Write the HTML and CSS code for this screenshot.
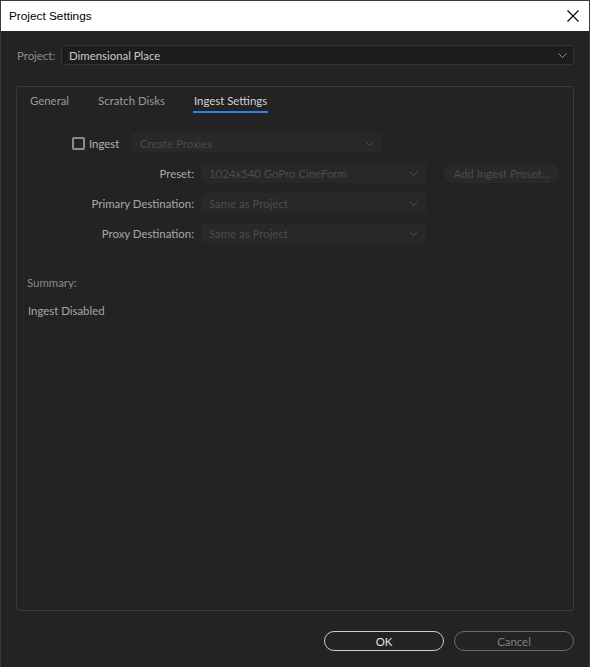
FILE: index.html
```html
<!DOCTYPE html>
<html>
<head>
<meta charset="utf-8">
<link rel="stylesheet" href="styles.css">
</head>
<body>
<div class="window">
  <div class="titlebar">
    <span class="title">Project Settings</span>
    <svg class="close" width="12" height="12" viewBox="0 0 12 12"><path d="M0.5 0.5 L11.5 11.5 M11.5 0.5 L0.5 11.5" stroke="#000" stroke-width="1.1" fill="none"/></svg>
  </div>
  <div class="content">
    <div class="project-row">
      <span class="project-label">Project:</span>
      <div class="select project-select">
        <span>Dimensional Place</span>
        <svg class="chev" width="9" height="5" viewBox="0 0 9 5"><polyline points="0.5,0.5 4.5,4.5 8.5,0.5" fill="none" stroke="#8a8a8a" stroke-width="1"/></svg>
      </div>
    </div>
    <div class="panel">
      <div class="tabs">
        <span class="tab">General</span>
        <span class="tab">Scratch Disks</span>
        <span class="tab active">Ingest Settings</span>
      </div>
      <div class="form">
        <div class="ingest-row">
          <span class="checkbox"></span>
          <span class="ingest-label">Ingest</span>
          <div class="select disabled proxies">
            <span>Create Proxies</span>
            <svg class="chev" width="9" height="5" viewBox="0 0 9 5"><polyline points="0.5,0.5 4.5,4.5 8.5,0.5" fill="none" stroke="#4d4d4d" stroke-width="1"/></svg>
          </div>
        </div>
        <div class="field-row">
          <span class="field-label">Preset:</span>
          <div class="select disabled field">
            <span>1024x540 GoPro CineForm</span>
            <svg class="chev" width="9" height="5" viewBox="0 0 9 5"><polyline points="0.5,0.5 4.5,4.5 8.5,0.5" fill="none" stroke="#4d4d4d" stroke-width="1"/></svg>
          </div>
          <span class="pill-btn">Add Ingest Preset...</span>
        </div>
        <div class="field-row">
          <span class="field-label">Primary Destination:</span>
          <div class="select disabled field">
            <span>Same as Project</span>
            <svg class="chev" width="9" height="5" viewBox="0 0 9 5"><polyline points="0.5,0.5 4.5,4.5 8.5,0.5" fill="none" stroke="#4d4d4d" stroke-width="1"/></svg>
          </div>
        </div>
        <div class="field-row">
          <span class="field-label">Proxy Destination:</span>
          <div class="select disabled field">
            <span>Same as Project</span>
            <svg class="chev" width="9" height="5" viewBox="0 0 9 5"><polyline points="0.5,0.5 4.5,4.5 8.5,0.5" fill="none" stroke="#4d4d4d" stroke-width="1"/></svg>
          </div>
        </div>
      </div>
      <div class="summary">Summary:</div>
      <div class="summary-text">Ingest Disabled</div>
    </div>
    <div class="buttons">
      <span class="btn ok">OK</span>
      <span class="btn cancel">Cancel</span>
    </div>
  </div>
</div>
</body>
</html>
```
FILE: styles.css
```css
* { box-sizing: border-box; }
html, body { margin: 0; padding: 0; background: #232323; }
body { font-family: Lato, "Open Sans", sans-serif; font-size: 11.4px; }
.window {
  width: 590px;
  height: 667px;
  border: 1px solid #3a3a3a;
  border-bottom: none;
  background: #232323;
  display: flex;
  flex-direction: column;
}
.titlebar {
  height: 30px;
  background: #ffffff;
  display: flex;
  align-items: center;
  justify-content: space-between;
  padding: 0 10px 0 8px;
}
.title {
  font-family: "Liberation Sans", sans-serif;
  font-size: 11.8px;
  color: #000;
}
.close { display: block; }
.content {
  flex: 1;
  display: flex;
  flex-direction: column;
  padding: 14px 15px 16px 15px;
}
.project-row {
  display: flex;
  align-items: center;
  height: 20px;
}
.project-label {
  color: #8e8e8e;
  width: 45px;
  padding-left: 1px;
}
.select {
  display: flex;
  align-items: center;
  justify-content: space-between;
  height: 20px;
  border-radius: 2px;
}
.project-select {
  flex: 1;
  background: #1d1d1d;
  border: 1px solid #343434;
  padding: 0 6px 0 7px;
  color: #cacaca;
}
.chev { display: block; }
.panel {
  margin-top: 21px;
  height: 525px;
  border: 1px solid #3a3a3a;
  border-radius: 3px;
  display: flex;
  flex-direction: column;
}
.tabs {
  display: flex;
  gap: 27px;
  padding: 6px 0 0 12px;
}
.tab {
  color: #9a9a9a;
  line-height: 16px;
  padding: 0 1px 2px;
  border-bottom: 2px solid transparent;
}
.tab.active {
  color: #d2d2d2;
  border-bottom-color: #2b83e6;
}
.form {
  display: flex;
  flex-direction: column;
  gap: 10px;
  margin-top: 20px;
}
.ingest-row {
  display: flex;
  align-items: center;
  height: 20px;
  padding-left: 55px;
}
.checkbox {
  width: 13px;
  height: 13px;
  border: 2px solid #8c8c8c;
  border-radius: 2px;
}
.ingest-label {
  color: #b2b2b2;
  margin-left: 4px;
  width: 43px;
}
.disabled {
  background: #282828;
  color: #4c4c4c;
  padding: 0 8px 0 8px;
}
.proxies { width: 250px; }
.field-row {
  display: flex;
  align-items: center;
  height: 20px;
}
.field-label {
  width: 177px;
  text-align: right;
  color: #a8a8a8;
}
.field {
  width: 225px;
  margin-left: 7px;
}
.pill-btn {
  margin-left: 18px;
  width: 115px;
  height: 20px;
  border-radius: 10px;
  background: #292929;
  color: #4c4c4c;
  display: flex;
  align-items: center;
  justify-content: center;
}
.summary {
  color: #8a8a8a;
  margin: 32px 0 0 10px;
  line-height: 16px;
}
.summary-text {
  color: #a6a6a6;
  margin: 12px 0 0 11px;
  line-height: 16px;
}
.buttons {
  display: flex;
  justify-content: flex-end;
  gap: 10px;
  margin-top: 20px;
}
.btn {
  width: 120px;
  height: 20px;
  border-radius: 10px;
  display: flex;
  align-items: center;
  justify-content: center;
}
.ok {
  border: 1.5px solid #cdcdcd;
  color: #e2e2e2;
}
.cancel {
  border: 1.5px solid #6c6c6c;
  color: #808080;
}
```
